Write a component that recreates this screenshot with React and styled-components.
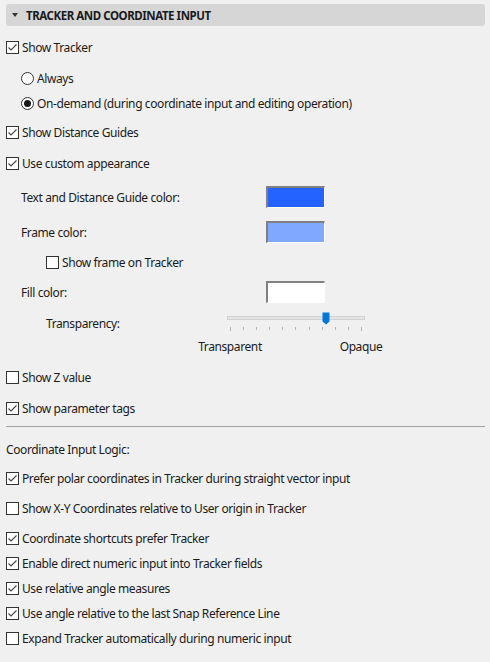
import React from 'react';
import styled, { createGlobalStyle } from 'styled-components';

const GlobalStyle = createGlobalStyle`
  html, body {
    margin: 0;
    padding: 0;
    background: #f0f0f0;
  }
  body {
    font-family: "Noto Sans", "Open Sans", sans-serif;
    font-size: 12px;
    letter-spacing: -0.4px;
    color: #1b1b1b;
  }
`;

const Panel = styled.div`
  width: 490px;
  height: 662px;
  padding-top: 4px;
  box-sizing: border-box;
  display: flex;
  flex-direction: column;
  background: #f0f0f0;
  overflow: hidden;
`;

const Header = styled.div`
  margin: 0 5px 0 6px;
  height: 22px;
  background: #d6d6d6;
  border-radius: 3px;
  display: flex;
  align-items: center;
  padding-left: 6px;
  gap: 8px;
  font-weight: 700;
  font-size: 11.5px;
  letter-spacing: -0.45px;
  color: #1a1a1a;
`;

const Caret = styled.span`
  width: 0;
  height: 0;
  border-left: 3.5px solid transparent;
  border-right: 3.5px solid transparent;
  border-top: 4px solid #333;
`;

const Row = styled.div`
  height: 22px;
  margin-top: ${p => p.$mt || 0}px;
  padding-left: ${p => p.$indent || 6}px;
  display: flex;
  align-items: center;
  white-space: nowrap;
`;

const Box = styled.span`
  width: 13px;
  height: 13px;
  box-sizing: border-box;
  border: 1px solid #333;
  background: #fff;
  margin-right: 3px;
  display: flex;
  align-items: center;
  justify-content: center;
  flex-shrink: 0;
`;

const RadioCircle = styled.span`
  width: 13px;
  height: 13px;
  box-sizing: border-box;
  border: 1px solid #333;
  border-radius: 50%;
  background: #fff;
  margin-right: 3px;
  display: flex;
  align-items: center;
  justify-content: center;
  flex-shrink: 0;

  &::after {
    content: '';
    display: ${p => (p.$on ? 'block' : 'none')};
    width: 7px;
    height: 7px;
    border-radius: 50%;
    background: #1a1a1a;
  }
`;

const Label = styled.span`
  width: ${p => (p.$w ? `${p.$w}px` : 'auto')};
  flex-shrink: 0;
`;

const Swatch = styled.span`
  width: 59px;
  height: 22px;
  box-sizing: border-box;
  border-top: 2px solid #808080;
  border-left: 2px solid #808080;
  border-right: 1px solid #fff;
  border-bottom: 1px solid #fff;
  background: ${p => p.$color};
`;

const Slider = styled.div`
  position: relative;
  width: 138px;
  height: 22px;
  align-self: flex-start;
`;

const Track = styled.div`
  position: absolute;
  left: 0;
  right: 0;
  top: 4px;
  height: 4px;
  box-sizing: border-box;
  background: #e4e4e4;
  border: 1px solid #d2d2d2;
`;

const Thumb = styled.svg`
  position: absolute;
  top: 0;
`;

const Ticks = styled.div`
  position: absolute;
  left: 3px;
  right: 3px;
  top: 15px;
  display: flex;
  justify-content: space-between;
`;

const Tick = styled.span`
  width: 1px;
  height: ${p => (p.$end ? 4 : 3)}px;
  background: #b4b4b4;
`;

const EndLabels = styled.div`
  margin-top: 1px;
  margin-left: 230px;
  width: 131px;
  height: 22px;
  display: flex;
  align-items: center;
  justify-content: space-between;
`;

const Anchor = styled.span`
  width: 0;
  display: flex;
  justify-content: center;
  white-space: nowrap;
`;

const Separator = styled.div`
  margin: 7px 5px 0 6px;
  height: 1px;
  background: #a0a0a0;
`;

const Check = ({ on }) => (
  <Box>
    {on && (
      <svg width="11" height="11" viewBox="0 0 11 11">
        <polyline points="1.5,5.5 4,8 9.5,2.5" fill="none" stroke="#444" strokeWidth="1.1" />
      </svg>
    )}
  </Box>
);

const CheckRow = ({ on, label, mt, indent }) => (
  <Row $mt={mt} $indent={indent}>
    <Check on={on} />
    <Label>{label}</Label>
  </Row>
);

const RadioRow = ({ on, label, mt }) => (
  <Row $mt={mt} $indent={21}>
    <RadioCircle $on={on} />
    <Label>{label}</Label>
  </Row>
);

const ColorRow = ({ label, color, mt }) => (
  <Row $mt={mt} $indent={21}>
    <Label $w={245}>{label}</Label>
    <Swatch $color={color} />
  </Row>
);

const TICKS = 11;
const value = 0.72;

const logic = [
  { label: 'Prefer polar coordinates in Tracker during straight vector input', on: true, mt: 7 },
  { label: 'Show X-Y Coordinates relative to User origin in Tracker', on: false, mt: 8 },
  { label: 'Coordinate shortcuts prefer Tracker', on: true, mt: 8 },
  { label: 'Enable direct numeric input into Tracker fields', on: true, mt: 3 },
  { label: 'Use relative angle measures', on: true, mt: 3 },
  { label: 'Use angle relative to the last Snap Reference Line', on: true, mt: 3 },
  { label: 'Expand Tracker automatically during numeric input', on: false, mt: 3 },
];

export default function App() {
  return (
    <>
      <GlobalStyle />
      <Panel>
        <Header>
          <Caret />
          TRACKER AND COORDINATE INPUT
        </Header>

        <CheckRow on label="Show Tracker" mt={10} />
        <RadioRow label="Always" mt={9} />
        <RadioRow on label="On-demand (during coordinate input and editing operation)" mt={3} />
        <CheckRow on label="Show Distance Guides" mt={7} />
        <CheckRow on label="Use custom appearance" mt={9} />

        <ColorRow label="Text and Distance Guide color:" color="#2463ff" mt={12} />
        <ColorRow label="Frame color:" color="#80a8ff" mt={13} />
        <CheckRow label="Show frame on Tracker" mt={8} indent={46} />
        <ColorRow label="Fill color:" color="#ffffff" mt={8} />

        <Row $mt={9} $indent={46}>
          <Label $w={181}>Transparency:</Label>
          <Slider>
            <Track />
            <Thumb
              width="8"
              height="13"
              viewBox="0 0 8 13"
              style={{ left: `${value * 138 - 4}px` }}
            >
              <path d="M0.5,0.5 H7.5 V9.5 L4,12.5 L0.5,9.5 Z" fill="#0078d7" />
            </Thumb>
            <Ticks>
              {Array.from({ length: TICKS }).map((_, i) => (
                <Tick key={i} $end={i === 0 || i === TICKS - 1} />
              ))}
            </Ticks>
          </Slider>
        </Row>
        <EndLabels>
          <Anchor>Transparent</Anchor>
          <Anchor>Opaque</Anchor>
        </EndLabels>

        <CheckRow label="Show Z value" mt={9} />
        <CheckRow on label="Show parameter tags" mt={9} />

        <Separator />

        <Row $mt={11}>
          <Label>Coordinate Input Logic:</Label>
        </Row>

        {logic.map(item => (
          <CheckRow key={item.label} on={item.on} label={item.label} mt={item.mt} />
        ))}
      </Panel>
    </>
  );
}
